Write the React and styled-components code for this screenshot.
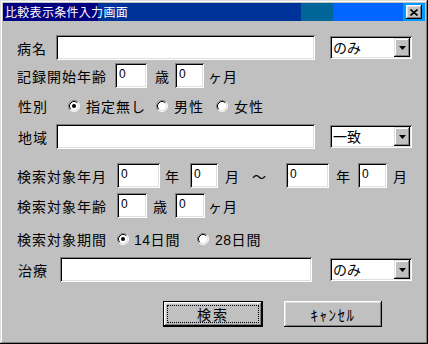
import React from 'react';
import styled, { createGlobalStyle } from 'styled-components';

const GlobalStyle = createGlobalStyle`
  html, body {
    margin: 0;
    padding: 0;
    background: #c0c0c0;
  }
  * {
    box-sizing: border-box;
  }
`;

const JP = `"Noto Sans CJK JP", "Noto Sans", sans-serif`;

const Window = styled.div`
  width: 428px;
  height: 344px;
  padding: 3px;
  background: #c0c0c0;
  box-shadow: inset -1px -1px #000, inset 1px 1px #dfdfdf,
    inset -2px -2px #808080, inset 2px 2px #fff;
  display: flex;
  flex-direction: column;
  font-family: ${JP};
  color: #000;
`;

const TitleBar = styled.div`
  height: 18px;
  display: flex;
  align-items: center;
  justify-content: space-between;
  padding: 0 3px 0 2px;
  background: linear-gradient(
    to right,
    #000080 0px, #000080 95px,
    #003399 95px, #003399 298px,
    #006699 298px, #006699 330px,
    #0066ff 330px, #0066ff 400px,
    #0099ff 400px
  );
`;

const Title = styled.span`
  color: #fff;
  font-size: 12px;
  line-height: 18px;
  letter-spacing: 0.3px;
`;

const CloseButton = styled.div`
  width: 16px;
  height: 14px;
  background: #c0c0c0;
  box-shadow: inset -1px -1px #000, inset 1px 1px #fff,
    inset -2px -2px #808080, inset 2px 2px #dfdfdf;
  display: flex;
  align-items: center;
  justify-content: center;
`;

const Body = styled.div`
  flex: 1;
  display: flex;
  flex-direction: column;
  padding: 14px 0 0 13px;
`;

const Row = styled.div`
  display: flex;
  align-items: center;
  height: 25px;
  margin-top: ${(p) => p.$top || 0}px;
`;

const Label = styled.span`
  width: ${(p) => p.$w}px;
  flex: none;
  padding-left: ${(p) => p.$pl || 1}px;
  font-size: 14px;
  letter-spacing: 1px;
  white-space: nowrap;
`;

const Unit = styled.span`
  flex: none;
  width: ${(p) => (p.$w ? `${p.$w}px` : 'auto')};
  padding-left: ${(p) => p.$pl || 0}px;
  font-size: 14px;
  letter-spacing: 1px;
  white-space: nowrap;
`;

const Field = styled.div`
  flex: none;
  width: ${(p) => p.$w}px;
  height: 25px;
  background: #fff;
  box-shadow: inset 1px 1px #808080, inset -1px -1px #fff,
    inset 2px 2px #000, inset -2px -2px #dfdfdf;
  padding: 4px 0 0 4px;
  font-family: "Liberation Sans", Arial, sans-serif;
  font-size: 12px;
  line-height: 14px;
`;

const Select = styled.div`
  flex: none;
  width: 82px;
  height: 23px;
  margin-left: ${(p) => p.$ml}px;
  background: #fff;
  box-shadow: inset 1px 1px #808080, inset -1px -1px #fff,
    inset 2px 2px #000, inset -2px -2px #dfdfdf;
  padding: 2px;
  display: flex;
  align-items: stretch;
`;

const SelectValue = styled.span`
  flex: 1;
  font-size: 14px;
  line-height: 19px;
  padding-left: 1px;
`;

const DropButton = styled.div`
  width: 16px;
  background: #c0c0c0;
  box-shadow: inset -1px -1px #000, inset 1px 1px #dfdfdf,
    inset -2px -2px #808080, inset 2px 2px #fff;
  display: flex;
  align-items: center;
  justify-content: center;
`;

const RadioItem = styled.div`
  flex: none;
  width: ${(p) => (p.$w ? `${p.$w}px` : 'auto')};
  display: flex;
  align-items: center;
  gap: ${(p) => p.$gap || 6}px;
  font-size: 14px;
  letter-spacing: 1px;
  white-space: nowrap;
`;

const Digits = styled.span`
  font-family: "Liberation Sans", Arial, sans-serif;
  letter-spacing: 0.5px;
`;

const ButtonRow = styled.div`
  display: flex;
  gap: 21px;
  margin: 19px 0 0 147px;
`;

const Button = styled.div`
  width: ${(p) => p.$w}px;
  height: 26px;
  background: #c0c0c0;
  display: flex;
  align-items: center;
  justify-content: center;
  font-size: ${(p) => (p.$default ? 14 : 15)}px;
  letter-spacing: ${(p) => (p.$default ? 2 : 1.5)}px;
  box-shadow: ${(p) =>
    p.$default
      ? 'inset 0 0 0 1px #000, inset -2px -2px #000, inset 2px 2px #fff, inset -3px -3px #808080, inset 3px 3px #dfdfdf'
      : 'inset -1px -1px #000, inset 1px 1px #fff, inset -2px -2px #808080, inset 2px 2px #dfdfdf'};
  position: relative;
`;

const FocusRing = styled.span`
  position: absolute;
  inset: 4px;
  border: 1px dotted #000;
`;

const Radio = ({ checked }) => (
  <svg width="12" height="12" viewBox="0 0 12 12">
    <circle cx="6" cy="6" r="5" fill="#fff" />
    <path d="M2.11 9.89 A5.5 5.5 0 0 1 9.89 2.11" fill="none" stroke="#808080" />
    <path d="M9.89 2.11 A5.5 5.5 0 0 1 2.11 9.89" fill="none" stroke="#fff" />
    <path d="M2.82 9.18 A4.5 4.5 0 0 1 9.18 2.82" fill="none" stroke="#000" />
    <path d="M9.18 2.82 A4.5 4.5 0 0 1 2.82 9.18" fill="none" stroke="#dfdfdf" />
    {checked && <circle cx="6" cy="6" r="2" fill="#000" />}
  </svg>
);

const Combo = ({ value, ml }) => (
  <Select $ml={ml}>
    <SelectValue>{value}</SelectValue>
    <DropButton>
      <svg width="7" height="4" viewBox="0 0 7 4">
        <polygon points="0,0 7,0 3.5,4" fill="#000" />
      </svg>
    </DropButton>
  </Select>
);

export default function App() {
  return (
    <>
      <GlobalStyle />
      <Window>
        <TitleBar>
          <Title>比較表示条件入力画面</Title>
          <CloseButton>
            <svg width="8" height="7" viewBox="0 0 8 7">
              <path d="M0.5 0.5 L7.5 6.5 M7.5 0.5 L0.5 6.5" stroke="#000" strokeWidth="1.6" />
            </svg>
          </CloseButton>
        </TitleBar>
        <Body>
          <Row>
            <Label $w={40} $pl={1}>病名</Label>
            <Field $w={259} />
            <Combo value="のみ" ml={15} />
          </Row>

          <Row $top={3}>
            <Label $w={99} $pl={0}>記録開始年齢</Label>
            <Field $w={32}>0</Field>
            <Unit $w={28} $pl={8}>歳</Unit>
            <Field $w={29}>0</Field>
            <Unit $pl={4}>ヶ月</Unit>
          </Row>

          <Row $top={5}>
            <Label $w={52} $pl={2}>性別</Label>
            <RadioItem $w={88}>
              <Radio checked />
              指定無し
            </RadioItem>
            <RadioItem $w={60}>
              <Radio />
              男性
            </RadioItem>
            <RadioItem>
              <Radio />
              女性
            </RadioItem>
          </Row>

          <Row $top={6}>
            <Label $w={40} $pl={2}>地域</Label>
            <Field $w={259} />
            <Combo value="一致" ml={15} />
          </Row>

          <Row $top={14}>
            <Label $w={101} $pl={1}>検索対象年月</Label>
            <Field $w={43}>0</Field>
            <Unit $w={30} $pl={5}>年</Unit>
            <Field $w={28}>0</Field>
            <Unit $w={34} $pl={7}>月</Unit>
            <Unit $w={34}>〜</Unit>
            <Field $w={43}>0</Field>
            <Unit $w={29} $pl={7}>年</Unit>
            <Field $w={29}>0</Field>
            <Unit $pl={6}>月</Unit>
          </Row>

          <Row $top={5}>
            <Label $w={101} $pl={1}>検索対象年齢</Label>
            <Field $w={30}>0</Field>
            <Unit $w={28} $pl={6}>歳</Unit>
            <Field $w={30}>0</Field>
            <Unit $pl={3}>ヶ月</Unit>
          </Row>

          <Row $top={8}>
            <Label $w={101} $pl={1}>検索対象期間</Label>
            <RadioItem $w={80} $gap={5}>
              <Radio checked />
              <span><Digits>14</Digits>日間</span>
            </RadioItem>
            <RadioItem $gap={6}>
              <Radio />
              <span><Digits>28</Digits>日間</span>
            </RadioItem>
          </Row>

          <Row $top={6}>
            <Label $w={44} $pl={2}>治療</Label>
            <Field $w={252} />
            <Combo value="のみ" ml={18} />
          </Row>

          <ButtonRow>
            <Button $w={100} $default>
              <FocusRing />
              検索
            </Button>
            <Button $w={98}>ｷｬﾝｾﾙ</Button>
          </ButtonRow>
        </Body>
      </Window>
    </>
  );
}
